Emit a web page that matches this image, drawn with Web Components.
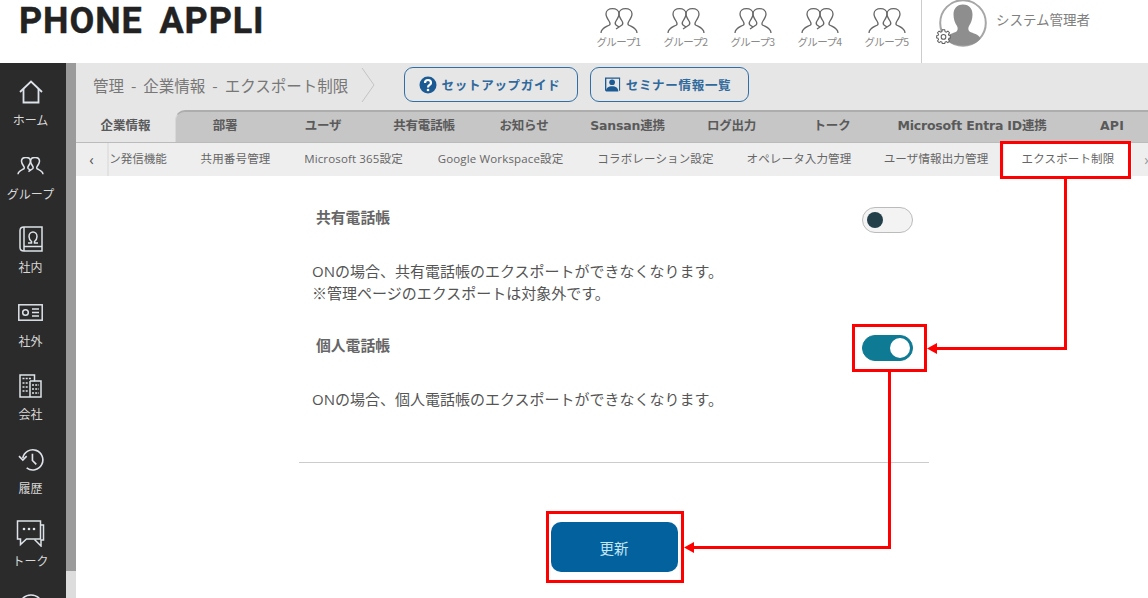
<!DOCTYPE html>
<html lang="ja">
<head>
<meta charset="utf-8">
<title>PHONE APPLI</title>
<style>
  html, body { margin: 0; height: 598px; overflow: hidden; background: #fff; }
  body { font-family: "DejaVu Sans", "Noto Sans CJK JP", sans-serif; }
</style>
</head>
<body>
<app-shell>
  <app-header slot="header">
    <group-link label="グループ1"></group-link>
    <group-link label="グループ2"></group-link>
    <group-link label="グループ3"></group-link>
    <group-link label="グループ4"></group-link>
    <group-link label="グループ5"></group-link>
  </app-header>
  <side-rail slot="rail">
    <rail-item label="ホーム" icon="home"></rail-item>
    <rail-item label="グループ" icon="group"></rail-item>
    <rail-item label="社内" icon="book"></rail-item>
    <rail-item label="社外" icon="card"></rail-item>
    <rail-item label="会社" icon="company"></rail-item>
    <rail-item label="履歴" icon="history"></rail-item>
    <rail-item label="トーク" icon="talk"></rail-item>
  </side-rail>
  <crumb-bar>管理 - 企業情報 - エクスポート制限</crumb-bar>
  <main-tabs></main-tabs>
  <sub-tabs></sub-tabs>
  <export-form>
    <export-setting label="共有電話帳">
      ONの場合、共有電話帳のエクスポートができなくなります。<br>※管理ページのエクスポートは対象外です。
    </export-setting>
    <export-setting label="個人電話帳" checked>
      ONの場合、個人電話帳のエクスポートができなくなります。
    </export-setting>
  </export-form>
</app-shell>
<callout-layer></callout-layer>

<script>
const html = String.raw;

const GROUP_PATHS = html`<path d="M1 25C1 20 6 19 9.500 17 10.500 16 10 14.500 9 13 7 10 6 8 6 6 6 2.500 9 .7 12.500 .7S19 2.500 19 6C19 8 18 10 16 13 15 14.500 15 16 16 17L19 19"/><path d="M37 25C37 20 32 19 28.500 17 27.500 16 28 14.500 29 13 31 10 32 8 32 6 32 2.500 29 .7 25.500 .7S19 2.500 19 6C19 8 20 10 22 13 23 14.500 23 16 22 17L19 19 16 21"/>`;

const ICONS = {
  home: html`<svg width="24" height="24" viewBox="0 0 24 24" fill="none" stroke="#dde3e8" stroke-width="1.800"><path d="M1 12 12 1.500 23 12"/><path d="M4.500 9V22.500H19.500V9"/></svg>`,
  group: html`<svg width="27" height="18" viewBox="0 0 38 26" fill="none" stroke="#dde3e8" stroke-width="2.200">${GROUP_PATHS}</svg>`,
  book: html`<svg width="24" height="26" viewBox="0 0 24 26" fill="none" stroke="#dde3e8" stroke-width="1.500"><path d="M5 1H23V25H5C2.500 25 1 23.500 1 21.500V4.500C1 2.500 2.500 1 5 1Z"/><path d="M5 1V25"/><path d="M5 20.500H23"/><path d="M9 17H12.500V15.500C10.500 14 10 12 10 10.500 10 8 11.800 6 14 6S18 8 18 10.500C18 12 17.500 14 15.500 15.500V17H19"/></svg>`,
  card: html`<svg width="25" height="17" viewBox="0 0 25 17" fill="none" stroke="#dde3e8" stroke-width="1.500"><rect x=".8" y=".8" width="23.400" height="15.400"/><circle cx="7.500" cy="8.500" r="2.800"/><path d="M14 5H21M14 8.500H21M14 12H21"/></svg>`,
  company: html`<svg width="23" height="24" viewBox="0 0 23 24" fill="none" stroke="#dde3e8" stroke-width="1.500"><path d="M1 1H15.500V7H22V23H1Z"/><path d="M11 7H15.500M11 7V23"/><path stroke-dasharray="2 1.200" d="M3.500 4.500H13M3.500 9H9M3.500 13H9M3.500 17H9M13 11H20M13 15H20M13 19H20"/></svg>`,
  history: html`<svg width="26" height="25" viewBox="0 0 27 26" fill="none" stroke="#dde3e8" stroke-width="1.700"><path d="M5 11.500A10.500 10.500 0 1 1 9 21.800"/><path d="M1 9.500l4 4 4-4"/><path d="M15 7v7l4 4"/></svg>`,
  talk: html`<svg width="29" height="28" viewBox="0 0 29 28" fill="none" stroke="#dde3e8" stroke-width="1.500"><path d="M1.500 2H24.500V20H10.500L4.500 25.500V20H1.500Z"/><path d="M24.500 6H27.500V21H25V27L18.500 20.500"/><circle cx="8" cy="10" r="1.300" fill="#dde3e8" stroke="none"/><circle cx="13" cy="10" r="1.300" fill="#dde3e8" stroke="none"/><circle cx="18" cy="10" r="1.300" fill="#dde3e8" stroke="none"/></svg>`,
};

class AppShell extends HTMLElement {
  constructor() {
    super();
    this.attachShadow({ mode: "open" });
    this.shadowRoot.innerHTML = html`
      <style>
        :host { display: grid; grid-template-columns: 66px 10px 1fr; grid-template-rows: 63px 535px; height: 598px; overflow: hidden; }
        .top { grid-column: 1 / -1; }
        .scroll { background: #ddd; display: flex; }
        .thumb { width: 10px; height: 508px; background: #9b9b9b; }
        main { min-width: 0; overflow: hidden; }
      </style>
      <div class="top"><slot name="header"></slot></div>
      <slot name="rail"></slot>
      <div class="scroll"><div class="thumb"></div></div>
      <main><slot></slot></main>
    `;
  }
}

class AppHeader extends HTMLElement {
  constructor() {
    super();
    this.attachShadow({ mode: "open" });
    this.shadowRoot.innerHTML = html`
      <style>
        :host { display: flex; height: 63px; background: #fff; align-items: flex-start; }
        .logo { font: 700 36px/43px Roboto, sans-serif; color: #222; -webkit-text-stroke: .4px #222; margin-left: 19px; letter-spacing: .9px; word-spacing: 7px; white-space: nowrap; width: 566px; }
        .groups { display: flex; }
        .user { margin-left: 1px; width: 226px; height: 63px; border-left: 1px solid #ccc; display: flex; position: relative; }
        .avatar { display: block; margin: -1px 0 0 17px; }
        .name { font: 13.500px/39px "Noto Sans CJK JP", sans-serif; color: #808080; margin-left: 9px; }
        .gear { position: absolute; left: 14px; top: 29px; }
      </style>
      <div class="logo">PHONE APPLI</div>
      <div class="groups"><slot></slot></div>
      <div class="user">
        <svg class="avatar" width="48" height="48" viewBox="0 0 48 48">
          <circle cx="24" cy="24" r="22.800" fill="#fff" stroke="#a6a6a6" stroke-width="2"/>
          <path fill="#8e8e8e" d="M24 5.500C17.500 5.500 14.500 10 14.500 15.500 14.500 20 15.800 24 18 27 19 29 19 31 17.500 32.500 14 34.500 8.500 35 6.500 39.500 10 44.500 17 46.500 24 46.500S38 44.500 41.500 39.500C39.500 35 34 34.500 30.500 32.500 29 31 29 29 30 27 32.200 24 33.500 20 33.500 15.500 33.500 10 30.500 5.500 24 5.500Z"/>
        </svg>
        <span class="name">システム管理者</span>
        <svg class="gear" width="15" height="15" viewBox="0 0 16 16" fill="#fff" stroke="#5f5f5f" stroke-width="1.100">
          <path d="M6.700 .8H9.300L9.700 2.800 11 3.400 12.700 2.300 14.400 4 13.300 5.700 13.900 7 15.700 7.400V9.400L13.900 9.800 13.300 11.100 14.400 12.800 12.700 14.500 11 13.400 9.700 14 9.300 15.500H6.700L6.300 14 5 13.400 3.300 14.500 1.600 12.800 2.700 11.100 2.100 9.800 .3 9.400V7.400L2.100 7 2.700 5.700 1.600 4 3.300 2.300 5 3.400 6.300 2.800Z"/>
          <circle cx="8" cy="8.400" r="2.500"/>
        </svg>
      </div>
    `;
  }
}

class GroupLink extends HTMLElement {
  constructor() {
    super();
    this.attachShadow({ mode: "open" });
    this.shadowRoot.innerHTML = html`
      <style>
        :host { display: flex; flex-direction: column; align-items: center; width: 67px; padding-top: 8px; }
        svg { display: block; }
        span { font: 10.500px/14px "Noto Sans CJK JP", sans-serif; color: #8a8a8a; letter-spacing: -.6px; margin-top: 1px; white-space: nowrap; }
      </style>
      <svg width="38" height="26" viewBox="0 0 38 26" fill="none" stroke="#666" stroke-width="1.300">${GROUP_PATHS}</svg>
      <span>${this.getAttribute("label")}</span>
    `;
  }
}

class SideRail extends HTMLElement {
  constructor() {
    super();
    this.attachShadow({ mode: "open" });
    this.shadowRoot.innerHTML = html`
      <style>
        :host { display: block; background: #2b2b2b; height: 535px; overflow: hidden; padding: 14px 5px 0 0; box-sizing: border-box; }
        .next { display: flex; justify-content: center; padding-top: 2px; }
      </style>
      <slot></slot>
      <div class="next"><svg width="26" height="26" viewBox="0 0 26 26" fill="none" stroke="#dde3e8" stroke-width="1.500"><circle cx="13" cy="13" r="12"/></svg></div>
    `;
  }
}

class RailItem extends HTMLElement {
  constructor() {
    super();
    this.attachShadow({ mode: "open" });
    this.shadowRoot.innerHTML = html`
      <style>
        :host { display: flex; flex-direction: column; align-items: center; height: 73.500px; box-sizing: border-box; }
        .icon { height: 30px; display: flex; align-items: center; justify-content: center; }
        span { font: 12px/16px "Noto Sans CJK JP", sans-serif; color: #d8d8d8; margin-top: 5px; white-space: nowrap; }
      </style>
      <div class="icon">${ICONS[this.getAttribute("icon")]}</div>
      <span>${this.getAttribute("label")}</span>
    `;
  }
}

class CrumbBar extends HTMLElement {
  constructor() {
    super();
    this.attachShadow({ mode: "open" });
    this.shadowRoot.innerHTML = html`
      <style>
        :host { display: flex; align-items: center; box-sizing: border-box; height: 47px; background: #e6e6e6; padding: 0 0 4px 17px; }
        .path { font: 15.500px "Noto Sans CJK JP", sans-serif; word-spacing: 3.500px; color: #777; width: 256px; white-space: nowrap; }
        .chev { margin: 0 28px 0 12px; display: block; }
        guide-button + guide-button { margin-left: 12px; }
      </style>
      <span class="path"><slot></slot></span>
      <svg class="chev" width="15" height="36" viewBox="0 0 15 36" fill="none" stroke="#c4c4c4"><path d="M1 1l12 17L1 35"/></svg>
      <guide-button icon="help" width="174">セットアップガイド</guide-button>
      <guide-button icon="seminar" width="159">セミナー情報一覧</guide-button>
    `;
  }
}

class GuideButton extends HTMLElement {
  constructor() {
    super();
    this.attachShadow({ mode: "open" });
    const icon = this.getAttribute("icon") === "help"
      ? html`<svg width="18" height="18" viewBox="0 0 18 18"><circle cx="9" cy="9" r="8.500" fill="#1c5a94"/><path fill="none" stroke="#fff" stroke-width="2.200" d="M6 7c0-4 6-4 6 0 0 2-3 2-3 4.500"/><circle cx="9" cy="14" r="1.300" fill="#fff"/></svg>`
      : html`<svg width="16" height="15" viewBox="0 0 18 16"><path fill="#1c5a94" d="M0 0h17v1.500H1.500V15H0z"/><path fill="none" stroke="#1c5a94" stroke-width="1.200" d="M16.400 1v14"/><circle cx="8" cy="5.500" r="3.200" fill="#1c5a94"/><path fill="#1c5a94" d="M1 16c0-4 3-6 7-6s7 2 7 6z"/></svg>`;
    this.shadowRoot.innerHTML = html`
      <style>
        :host { display: flex; align-items: center; justify-content: center; gap: 5px; padding-right: 3px; box-sizing: border-box; width: ${this.getAttribute("width")}px; height: 35px; border: 1.500px solid #2f6fa5; border-radius: 9px; color: #30699c; font: 700 12.500px "Noto Sans CJK JP", sans-serif; letter-spacing: .7px; white-space: nowrap; }
        svg { display: block; flex: none; }
      </style>
      ${icon}<slot></slot>
    `;
  }
}

class MainTabs extends HTMLElement {
  constructor() {
    super();
    this.attachShadow({ mode: "open" });
    const tabs = [["部署", 98], ["ユーザ", 98], ["共有電話帳", 104], ["お知らせ", 96], ["Sansan連携", 111], ["ログ出力", 97], ["トーク", 104], ["Microsoft Entra ID連携", 176]];
    this.shadowRoot.innerHTML = html`
      <style>
        :host { display: flex; height: 33px; background: #e6e6e6; font: 700 12.500px "DejaVu Sans", "Noto Sans CJK JP", sans-serif; color: #5a5a5a; border-bottom: 1px solid #bbb; box-sizing: border-box; }
        .active { width: 99px; text-align: center; line-height: 30px; font-family: "Noto Sans CJK JP", sans-serif; }
        .rest { flex: 1; display: flex; background: #c6c6c6; border-top: 2px solid #adadad; border-top-left-radius: 10px; border-left: 1px solid #d8d8d8; min-width: 0; }
        .rest span { text-align: center; line-height: 27px; white-space: nowrap; flex: none; letter-spacing: -.2px; }
        .rest .api { width: 72px; padding-left: 16px; letter-spacing: .2px; }
      </style>
      <div class="active">企業情報</div>
      <div class="rest">
        ${tabs.map(([t, w]) => `<span style="width:${w}px">${t}</span>`).join("")}
        <span class="api">API</span>
      </div>
    `;
  }
}

class SubTabs extends HTMLElement {
  constructor() {
    super();
    this.attachShadow({ mode: "open" });
    const items = [["共用番号管理", 103], ["Microsoft 365設定", 133], ["Google Workspace設定", 161], ["コラボレーション設定", 149], ["オペレータ入力管理", 138], ["ユーザ情報出力管理", 136]];
    this.shadowRoot.innerHTML = html`
      <style>
        :host { display: flex; height: 33px; background: #eee; font: 11.500px/32px "Open Sans", "Noto Sans CJK JP", sans-serif; color: #666; overflow: hidden; white-space: nowrap; position: relative; letter-spacing: .15px; }
        .back { width: 33px; flex: none; text-align: center; font-size: 15px; color: #555; border-right: 2px solid #e2e2e2; box-sizing: border-box; background: #eee; }
        .track { flex: none; display: flex; }
        .track span { flex: none; text-align: center; }
        .first { width: 58px; margin-right: 17px; overflow: hidden; letter-spacing: 0; }
        .on { background: #fff; width: 128px; }
        .next { position: absolute; right: -1px; top: 0; color: #999; font-size: 15px; }
      </style>
      <div class="back">‹</div>
      <div class="track">
        <span class="first">ン発信機能</span>
        ${items.map(([t, w]) => `<span style="width:${w}px">${t}</span>`).join("")}
        <span class="on">エクスポート制限</span>
      </div>
      <div class="next">›</div>
    `;
  }
}

class ExportForm extends HTMLElement {
  constructor() {
    super();
    this.attachShadow({ mode: "open" });
    this.shadowRoot.innerHTML = html`
      <style>
        :host { display: block; width: 630px; margin-left: 223px; padding-top: 31px; height: 392px; box-sizing: border-box; }
        .actions { border-top: 1px solid #ccc; margin-top: 52px; padding-top: 59px; display: flex; justify-content: center; }
        button { width: 127px; height: 50px; border: 0; border-radius: 10px; background: #03629e; color: #c4e6f5; font: 14.500px "Noto Sans CJK JP", sans-serif; padding: 0; }
      </style>
      <slot></slot>
      <div class="actions"><button type="button">更新</button></div>
    `;
  }
}

class ExportSetting extends HTMLElement {
  constructor() {
    super();
    this.attachShadow({ mode: "open" });
    const checked = this.hasAttribute("checked");
    this.shadowRoot.innerHTML = html`
      <style>
        :host { display: block; margin-bottom: 31px; }
        .head { display: flex; align-items: center; justify-content: space-between; padding: 0 16px 0 17px; height: 26px; margin-bottom: 27px; }
        .label { font: 700 14.800px "Noto Sans CJK JP", sans-serif; color: #666; padding-bottom: 8px; }
        .desc { margin: 0 0 0 13px; font: 15px/22px "Open Sans", "Noto Sans CJK JP", sans-serif; color: #555; }
      </style>
      <div class="head"><span class="label">${this.getAttribute("label")}</span><toggle-switch ${checked ? "checked" : ""}></toggle-switch></div>
      <p class="desc"><slot></slot></p>
    `;
  }
}

class ToggleSwitch extends HTMLElement {
  constructor() {
    super();
    this.attachShadow({ mode: "open" });
    this.shadowRoot.innerHTML = html`
      <style>
        :host { display: flex; align-items: center; box-sizing: border-box; width: 51px; height: 26px; border-radius: 13px; padding: 0 4px; background: #f3f3f3; border: 1px solid #bbb; }
        :host([checked]) { background: #0e7a94; border-color: #0e7a94; justify-content: flex-end; padding: 0 2px; }
        i { display: block; width: 16px; height: 16px; border-radius: 50%; background: #233f4a; }
        :host([checked]) i { width: 20px; height: 20px; background: #fff; }
      </style>
      <i></i>
    `;
  }
}

// red annotation boxes and arrows drawn over the screenshot
class CalloutLayer extends HTMLElement {
  constructor() {
    super();
    this.attachShadow({ mode: "open" });
    this.shadowRoot.innerHTML = html`
      <style>
        :host { position: absolute; left: 0; top: 0; width: 1148px; height: 598px; pointer-events: none; }
        svg { display: block; }
      </style>
      <svg width="1148" height="598" fill="none" stroke="#ff0000" stroke-width="3">
        <rect x="1001.500" y="142.500" width="128" height="35"/>
        <rect x="853.500" y="325.500" width="72" height="45"/>
        <rect x="547.500" y="512.500" width="135" height="69"/>
        <path d="M1065.500 179V348.500H936"/>
        <path d="M889.500 372V547.500H693"/>
        <path fill="#ff0000" stroke="none" d="M927 348.500l10-5.500v11zM684 547.500l10-5.500v11z"/>
      </svg>
    `;
  }
}

customElements.define("app-shell", AppShell);
customElements.define("app-header", AppHeader);
customElements.define("group-link", GroupLink);
customElements.define("side-rail", SideRail);
customElements.define("rail-item", RailItem);
customElements.define("crumb-bar", CrumbBar);
customElements.define("guide-button", GuideButton);
customElements.define("main-tabs", MainTabs);
customElements.define("sub-tabs", SubTabs);
customElements.define("export-form", ExportForm);
customElements.define("export-setting", ExportSetting);
customElements.define("toggle-switch", ToggleSwitch);
customElements.define("callout-layer", CalloutLayer);
</script>
</body>
</html>
